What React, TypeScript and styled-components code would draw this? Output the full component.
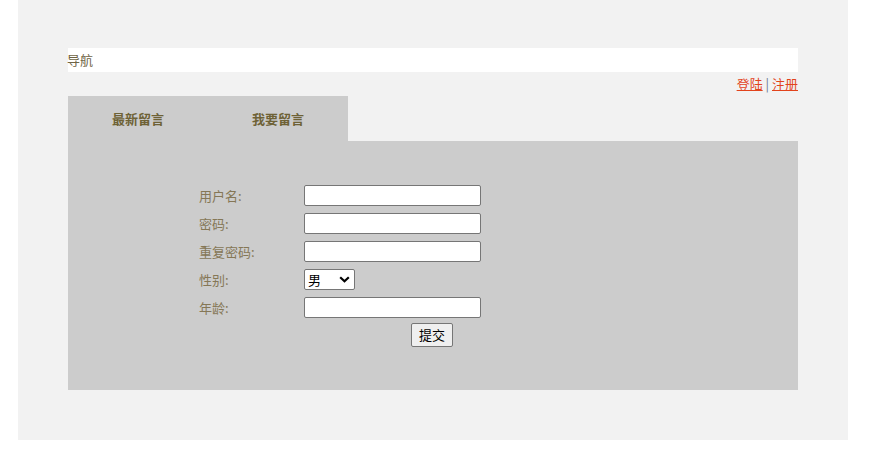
import { Fragment } from "react";
import styled, { createGlobalStyle } from "styled-components";

const GlobalStyle = createGlobalStyle`
    body {
        margin: 0;
        background: #ffffff;
        font-family: "Noto Sans CJK SC", "Noto Sans", sans-serif;
        font-size: 13px;
    }
`

const Page = styled.div`
    width: 830px;
    height: 440px;
    margin-left: 18px;
    padding: 48px 50px 0;
    box-sizing: border-box;
    background: #f2f2f2;
`

const NavBar = styled.div`
    height: 24px;
    line-height: 23px;
    background: #ffffff;
    color: #6f6445;
    text-indent: -1px;
`

const UserLinks = styled.div`
    height: 24px;
    line-height: 23px;
    text-align: right;
    color: #6b7590;

    a {
        color: #e2431c;
        text-decoration: underline;
    }
`

const TabBar = styled.ul`
    display: flex;
    width: 280px;
    margin: 0;
    padding: 0;
    list-style: none;
    background: #cccccc;
`

const Tab = styled.li`
    width: 140px;
    height: 45px;
    line-height: 45px;
    text-align: center;
    font-weight: bold;
    color: #6e6236;
`

const Panel = styled.div`
    height: 249px;
    padding: 44px 0 0 131px;
    box-sizing: border-box;
    background: #cccccc;
`

const Form = styled.form`
    display: grid;
    grid-template-columns: 105px 177px;
    grid-auto-rows: 21px;
    row-gap: 7px;
    align-items: center;
`

const Label = styled.label`
    color: #857756;
`

const TextInput = styled.input`
    width: 177px;
    height: 21px;
    box-sizing: border-box;
    border: 1px solid #767676;
    border-radius: 2px;
    background: #ffffff;
    padding: 1px 2px;
    font-size: 13px;
`

const SelectWrap = styled.div`
    position: relative;
    width: 51px;
    height: 21px;

    svg {
        position: absolute;
        right: 5px;
        top: 7px;
        pointer-events: none;
    }
`

const Select = styled.select`
    appearance: none;
    width: 51px;
    height: 21px;
    box-sizing: border-box;
    padding: 0 0 0 3px;
    border: 1px solid #767676;
    border-radius: 2px;
    background: #ffffff;
    font-size: 13px;
    line-height: 19px;
    font-family: "Noto Sans CJK SC", sans-serif;
    color: #000000;
`

const SubmitRow = styled.div`
    grid-column: 2;
    margin-top: -2px;
    padding-left: 107px;
`

const SubmitButton = styled.button`
    height: 24px;
    padding: 0 7px;
    border: 1px solid #767676;
    border-radius: 2px;
    background: #efefef;
    color: #000000;
    font-size: 13px;
    font-family: "Noto Sans CJK SC", sans-serif;
`

const fields = [
    { id: "username", label: "用户名:", type: "text" },
    { id: "password", label: "密码:", type: "password" },
    { id: "repeat", label: "重复密码:", type: "password" },
]

export default function App() {
    return (
        <>
            <GlobalStyle />
            <Page>
                <NavBar>导航</NavBar>
                <UserLinks>
                    <a href="#">登陆</a> | <a href="#">注册</a>
                </UserLinks>
                <TabBar>
                    <Tab>最新留言</Tab>
                    <Tab>我要留言</Tab>
                </TabBar>
                <Panel>
                    <Form onSubmit={(e) => e.preventDefault()}>
                        {fields.map((f) => (
                            <Fragment key={f.id}>
                                <Label htmlFor={f.id}>{f.label}</Label>
                                <TextInput id={f.id} type={f.type} />
                            </Fragment>
                        ))}
                        <Label htmlFor="sex">性别:</Label>
                        <SelectWrap>
                            <Select id="sex" defaultValue="男">
                                <option>男</option>
                                <option>女</option>
                            </Select>
                            <svg width="11" height="7" viewBox="0 0 11 7">
                                <path d="M1.2 1.2 L5.5 5.3 L9.8 1.2" fill="none" stroke="#000" strokeWidth="2.2" />
                            </svg>
                        </SelectWrap>
                        <Label htmlFor="age">年龄:</Label>
                        <TextInput id="age" type="text" />
                        <SubmitRow>
                            <SubmitButton type="submit">提交</SubmitButton>
                        </SubmitRow>
                    </Form>
                </Panel>
            </Page>
        </>
    )
}
